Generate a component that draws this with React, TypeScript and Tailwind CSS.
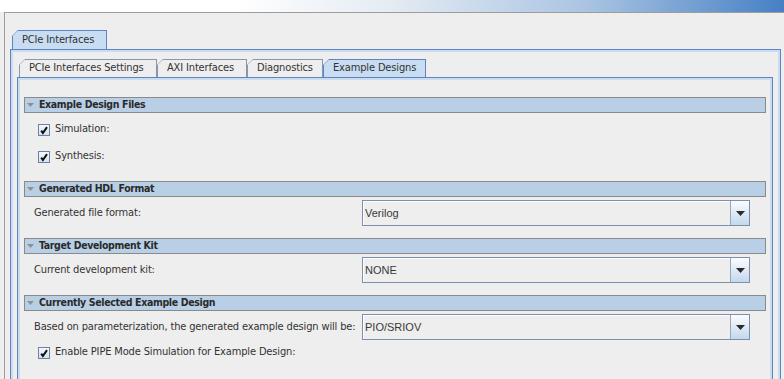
const UI = "font-['DejaVu_Sans_Condensed','DejaVu_Sans',sans-serif] text-[11px] tracking-[-0.15px] text-[#333333]";

function Tab({ label, width, selected, height }: { label: string; width: number; selected?: boolean; height: string }) {
  return (
    <div
      className={`${selected ? 'bg-[#6383be]' : 'bg-[#8896ae]'} ${height} px-px pt-px [clip-path:polygon(6px_0,100%_0,100%_100%,0_100%,0_6px)]`}
      style={{ width }}
    >
      <div
        className={`${selected ? 'bg-[#c8ddf2]' : 'bg-[#eeeeee]'} flex h-full items-center pl-[9px] whitespace-nowrap [clip-path:polygon(4.6px_0,100%_0,100%_100%,0_100%,0_4.6px)]`}
      >
        {label}
      </div>
    </div>
  );
}

function SectionBar({ title, className = '' }: { title: string; className?: string }) {
  return (
    <div className={`flex h-[16px] items-center border border-[#8a8a8a] bg-[#b8cfe6] ${className}`}>
      <svg width="7" height="4" viewBox="0 0 7 4" className="ml-[2px] mr-[5px]">
        <path d="M0 0 H7 L3.5 4 Z" fill="#909090" />
      </svg>
      <span className="text-[10.5px] font-bold tracking-[-0.35px] text-[#2a2a2a]">{title}</span>
    </div>
  );
}

function CheckBox() {
  return (
    <div className="h-[12px] w-[12px] border border-[#6d81a3] bg-[linear-gradient(to_bottom,#f4f8fc,#d3e1f1)]">
      <svg width="10" height="10" viewBox="0 0 10 10">
        <path d="M2.2 5.6 L3.9 8 L8 2.2" fill="none" stroke="#111111" strokeWidth="2" />
      </svg>
    </div>
  );
}

function CheckRow({ label, className = '' }: { label: string; className?: string }) {
  return (
    <div className={`flex items-center pl-[14px] ${className}`}>
      <CheckBox />
      <span className="ml-[5px]">{label}</span>
    </div>
  );
}

function ComboRow({ label, value, className = '' }: { label: string; value: string; className?: string }) {
  return (
    <div className={`flex items-center ${className}`}>
      <div className="w-[338px] shrink-0 whitespace-nowrap pl-[10px]">{label}</div>
      <div className="flex h-[26px] w-[388px] border border-[#7d8fae] bg-[#eeeeee]">
        <div className="flex flex-1 items-center border-l border-t border-white pl-[1px] font-['Liberation_Sans',Arial,sans-serif] text-[11px] tracking-normal text-[#383838]">
          {value}
        </div>
        <div className="flex w-[19px] items-center justify-center border-l border-[#9aa6ba] bg-[linear-gradient(to_bottom,#fbfdff,#c3d7ec)]">
          <svg width="9" height="5" viewBox="0 0 9 5">
            <path d="M0 0 H9 L4.5 5 Z" fill="#2b2b2b" />
          </svg>
        </div>
      </div>
    </div>
  );
}

export default function App() {
  return (
    <div className={`flex h-[379px] w-[784px] flex-col overflow-hidden bg-[#eeeeee] ${UI}`}>
      {/* title strip */}
      <div className="h-[12px] shrink-0 bg-[linear-gradient(to_right,#ffffff_0%,#ffffff_30%,#e4ebf3_50%,#a9c4e2_75%,#4680c4_100%)]" />

      <div className="ml-[4px] flex-1 border-l border-t border-[#9c9c9c] pl-[5px] pt-[17px]">
        {/* outer tab */}
        <div className="ml-[2px] flex">
          <Tab label="PCIe Interfaces" width={95} selected height="h-[19px]" />
        </div>

        {/* outer panel */}
        <div className="h-[400px] w-[771px] border border-[#6383be]">
          <div className="h-full border-2 border-[#c8ddf2] pl-[4px] pr-[5px] pt-[7px]">
            {/* inner tabs */}
            <div className="ml-[2px] flex">
              <Tab label="PCIe Interfaces Settings" width={138} height="h-[18px]" />
              <Tab label="AXI Interfaces" width={90} height="h-[18px]" />
              <Tab label="Diagnostics" width={76} height="h-[18px]" />
              <Tab label="Example Designs" width={103} selected height="h-[18px]" />
            </div>

            {/* inner panel */}
            <div className="h-[400px] border border-[#6383be]">
              <div className="h-full border-2 border-[#c8ddf2] px-[4px] pt-[17px]">
                <SectionBar title="Example Design Files" />
                <CheckRow label="Simulation:" className="mt-[3px] h-[27px]" />
                <CheckRow label="Synthesis:" className="h-[27px]" />

                <SectionBar title="Generated HDL Format" className="mt-[11px]" />
                <ComboRow label="Generated file format:" value="Verilog" className="mt-[3px]" />

                <SectionBar title="Target Development Kit" className="mt-[12px]" />
                <ComboRow label="Current development kit:" value="NONE" className="mt-[3px]" />

                <SectionBar title="Currently Selected Example Design" className="mt-[12px]" />
                <ComboRow
                  label="Based on parameterization, the generated example design will be:"
                  value="PIO/SRIOV"
                  className="mt-[3px]"
                />
                <CheckRow label="Enable PIPE Mode Simulation for Example Design:" className="h-[25px]" />
              </div>
            </div>
          </div>
        </div>
      </div>
    </div>
  );
}
